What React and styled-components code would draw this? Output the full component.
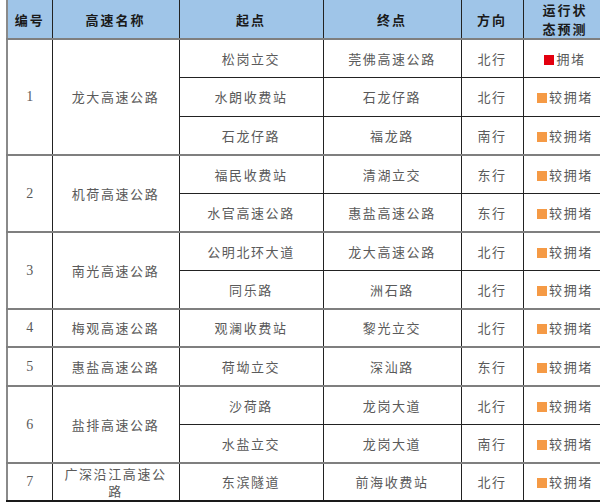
import styled, { createGlobalStyle } from "styled-components";

const GlobalStyle = createGlobalStyle`
  html, body {
    margin: 0;
    padding: 0;
    background: #ffffff;
    overflow: hidden;
  }
  body {
    font-family: "Noto Sans CJK SC", "Noto Sans", sans-serif;
  }
`;

const ROUTES = [
  {
    id: 1,
    name: "龙大高速公路",
    legs: [
      { from: "松岗立交", to: "莞佛高速公路", dir: "北行", level: "jam" },
      { from: "水朗收费站", to: "石龙仔路", dir: "北行", level: "slow" },
      { from: "石龙仔路", to: "福龙路", dir: "南行", level: "slow" }
    ]
  },
  {
    id: 2,
    name: "机荷高速公路",
    legs: [
      { from: "福民收费站", to: "清湖立交", dir: "东行", level: "slow" },
      { from: "水官高速公路", to: "惠盐高速公路", dir: "东行", level: "slow" }
    ]
  },
  {
    id: 3,
    name: "南光高速公路",
    legs: [
      { from: "公明北环大道", to: "龙大高速公路", dir: "北行", level: "slow" },
      { from: "同乐路", to: "洲石路", dir: "北行", level: "slow" }
    ]
  },
  {
    id: 4,
    name: "梅观高速公路",
    legs: [{ from: "观澜收费站", to: "黎光立交", dir: "北行", level: "slow" }]
  },
  {
    id: 5,
    name: "惠盐高速公路",
    legs: [{ from: "荷坳立交", to: "深汕路", dir: "东行", level: "slow" }]
  },
  {
    id: 6,
    name: "盐排高速公路",
    legs: [
      { from: "沙荷路", to: "龙岗大道", dir: "北行", level: "slow" },
      { from: "水盐立交", to: "龙岗大道", dir: "南行", level: "slow" }
    ]
  },
  {
    id: 7,
    name: "广深沿江高速公路",
    legs: [{ from: "东滨隧道", to: "前海收费站", dir: "北行", level: "slow" }]
  }
];

const LEVELS = {
  jam: { label: "拥堵", color: "#e3000f" },
  slow: { label: "较拥堵", color: "#f59a45" }
};

export default function App() {
  return (
    <>
      <GlobalStyle />
      <Page>
        <Table>
          <colgroup>
            <col style={{ width: 45 }} />
            <col style={{ width: 127 }} />
            <col style={{ width: 144 }} />
            <col style={{ width: 138 }} />
            <col style={{ width: 62 }} />
            <col style={{ width: 84 }} />
          </colgroup>
          <thead>
            <tr>
              <HeadCell>编号</HeadCell>
              <HeadCell>高速名称</HeadCell>
              <HeadCell>起点</HeadCell>
              <HeadCell>终点</HeadCell>
              <HeadCell>方向</HeadCell>
              <HeadCell $narrow>运行状态预测</HeadCell>
            </tr>
          </thead>
          <tbody>
            {ROUTES.map((route) =>
              route.legs.map((leg, i) => (
                <Row key={route.id + "-" + i} $groupStart={i === 0}>
                  {i === 0 && (
                    <>
                      <NumCell rowSpan={route.legs.length}>{route.id}</NumCell>
                      <NameCell rowSpan={route.legs.length}>{route.name}</NameCell>
                    </>
                  )}
                  <Cell>{leg.from}</Cell>
                  <Cell>{leg.to}</Cell>
                  <Cell>{leg.dir}</Cell>
                  <StatusCell>
                    <Swatch $color={LEVELS[leg.level].color} />
                    {LEVELS[leg.level].label}
                  </StatusCell>
                </Row>
              ))
            )}
          </tbody>
        </Table>
      </Page>
    </>
  );
}

const Page = styled.div`
  width: 600px;
  height: 504px;
  padding-left: 6px;
  box-sizing: border-box;
  overflow: hidden;
`;

const Table = styled.table`
  border-collapse: collapse;
  table-layout: fixed;
  width: 600px;
  border-left: 2px solid #8a8a8a;
  border-bottom: 2px solid #1a1a1a;
`;

const HeadCell = styled.th`
  height: 34px;
  padding: 0 ${(p) => (p.$narrow ? "14px" : "4px")};
  background: #9fc5e8;
  color: #1a1a1a;
  font-size: 13px;
  font-weight: bold;
  letter-spacing: 2px;
  line-height: 19px;
  text-align: center;
  border-right: 1px solid #222;
  border-bottom: 1px solid #222;
`;

const Row = styled.tr`
  height: 38.5px;

  td {
    border-top: ${(p) => (p.$groupStart ? "2px solid #7f7f7f" : "1px solid #222")};
  }
`;

const Cell = styled.td`
  padding: 0 6px;
  color: #5a5a5a;
  font-size: 13px;
  letter-spacing: 1.6px;
  line-height: 17px;
  text-align: center;
  vertical-align: middle;
  border-right: 1px solid #222;
`;

const NumCell = styled(Cell)`
  font-family: "Liberation Serif", serif;
  font-size: 14px;
  letter-spacing: 0;
`;

const NameCell = styled(Cell)`
  padding: 0 9px;
`;

const StatusCell = styled(Cell)`
  padding: 0 2px;
  white-space: nowrap;
`;

const Swatch = styled.span`
  display: inline-block;
  width: 10px;
  height: 10px;
  margin-right: 2px;
  vertical-align: -1px;
  background: ${(p) => p.$color};
`;
